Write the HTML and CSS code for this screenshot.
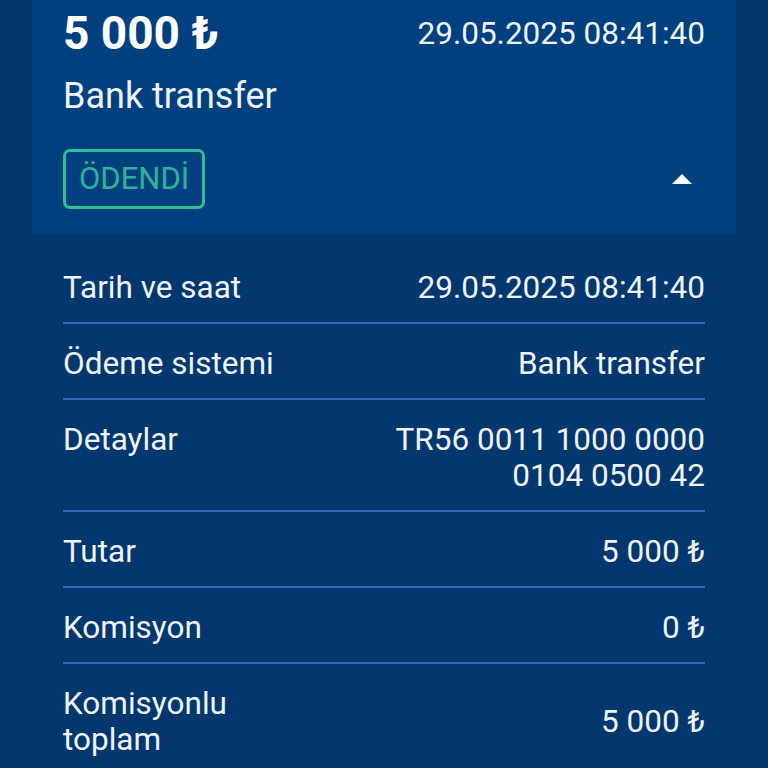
FILE: index.html
```html
<!DOCTYPE html>
<html lang="tr">
<head>
<meta charset="utf-8">
<link rel="stylesheet" href="styles.css">
</head>
<body>
<div class="page">
  <div class="card">
    <div class="card-head">
      <div class="head-top">
        <div class="amount">5 000 ₺</div>
        <div class="head-date">29.05.2025 08:41:40</div>
      </div>
      <div class="method">Bank transfer</div>
      <div class="head-bottom">
        <span class="badge">ÖDENDİ</span>
        <span class="caret"></span>
      </div>
    </div>
    <div class="card-body">
      <div class="row">
        <div class="label">Tarih ve saat</div>
        <div class="value">29.05.2025 08:41:40</div>
      </div>
      <div class="row">
        <div class="label">Ödeme sistemi</div>
        <div class="value">Bank transfer</div>
      </div>
      <div class="row">
        <div class="label">Detaylar</div>
        <div class="value wrap">TR56 0011 1000 0000<br>0104 0500 42</div>
      </div>
      <div class="row">
        <div class="label">Tutar</div>
        <div class="value">5 000 ₺</div>
      </div>
      <div class="row">
        <div class="label">Komisyon</div>
        <div class="value">0 ₺</div>
      </div>
      <div class="row center">
        <div class="label narrow">Komisyonlu toplam</div>
        <div class="value">5 000 ₺</div>
      </div>
    </div>
  </div>
</div>
</body>
</html>
```

FILE: styles.css
```css
* { box-sizing: border-box; }
html, body { margin: 0; padding: 0; }
body {
  background: #03376c;
  font-family: Roboto, "Noto Sans", sans-serif;
  color: #eef3fa;
  width: 768px;
  height: 768px;
  overflow: hidden;
}
.page {
  padding: 0 32px;
}
.card {
  width: 704px;
}
.card-head {
  background: #01407f;
  padding: 8px 31px 25px 31px;
}
.head-top {
  display: flex;
  justify-content: space-between;
  align-items: center;
  height: 50px;
}
.amount {
  font-size: 46px;
  font-weight: 700;
  color: #ffffff;
}
.head-date {
  font-size: 31.5px;
}
.method {
  font-size: 36px;
  margin-top: 18px;
  line-height: 40px;
}
.head-bottom {
  display: flex;
  justify-content: space-between;
  align-items: center;
  margin-top: 33px;
}
.badge {
  display: inline-block;
  border: 3px solid #2ebe98;
  border-radius: 7px;
  color: #2db39a;
  font-size: 31px;
  line-height: 54px;
  height: 60px;
  padding: 0 13px;
}
.caret {
  width: 0;
  height: 0;
  border-left: 10px solid transparent;
  border-right: 10px solid transparent;
  border-bottom: 10px solid #ffffff;
  margin-right: 13px;
}
.card-body {
  background: #04376d;
  padding: 14px 31px 0 31px;
}
.row {
  display: flex;
  justify-content: space-between;
  align-items: flex-start;
  padding: 22px 0 16px;
  font-size: 31.5px;
  line-height: 36px;
  border-bottom: 2px solid #2e68b8;
}
.row.center {
  align-items: center;
  border-bottom: none;
}
.value { text-align: right; }
.narrow { width: 220px; }
```
